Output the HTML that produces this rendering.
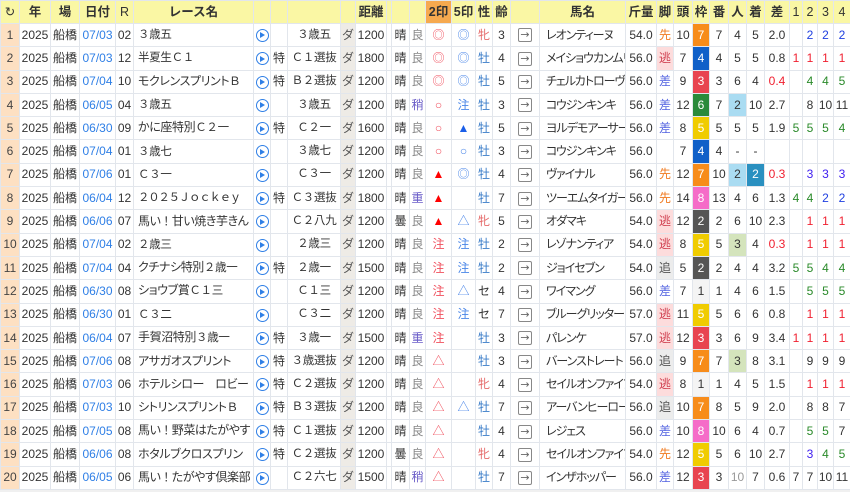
<!DOCTYPE html>
<html><head><meta charset="utf-8"><style>
*{margin:0;padding:0;box-sizing:border-box}
body{width:850px;height:492px;overflow:hidden;background:#f0f0f0;font-family:"Liberation Sans","Noto Sans CJK JP",sans-serif;font-size:12px;color:#333}
table{border-collapse:collapse;table-layout:fixed;width:850px;background:#fff}
td,th{border:1px solid #e2e6ec;text-align:center;white-space:nowrap;overflow:hidden;padding:0;height:23.3px;line-height:21px}
th{background:#faf7a4;font-weight:bold;height:23px;font-size:12.5px}
th.o{background:#f6a94f}
td.n{background:#fde0c2;color:#444}
td.dt{color:#2f7fe6}
td.nm{text-align:left;padding-left:4px;font-feature-settings:"palt";letter-spacing:-0.4px}
td.hn{text-align:left;padding-left:6px;font-feature-settings:"palt";letter-spacing:-1px}
td.cl{font-size:11.5px;letter-spacing:-0.3px}
.fw{font-feature-settings:normal;letter-spacing:-0.3px;font-size:11.5px}
td.da{background:#eeebe6;color:#555}
td.g{color:#888}
td.p{color:#6a5cc8}
.pl{display:inline-block;width:13px;height:13px;border:1.5px solid #2f7fe6;border-radius:50%;position:relative;vertical-align:middle}
.pl:after{content:"";position:absolute;left:3.5px;top:2.5px;border-left:5px solid #2f7fe6;border-top:3px solid transparent;border-bottom:3px solid transparent}
.ar{display:inline-block;width:14px;height:14px;border:1px solid #888;border-radius:2px;font-size:11px;line-height:12px;color:#666;vertical-align:middle;font-family:"DejaVu Sans",sans-serif}
.r{color:#f0505e}.b{color:#4a86e8}.rr{color:#f00}.bb{color:#1a5ee8}
.m{color:#3a7cc8}.f{color:#e56a6a}
.s{color:#f07a20}.e{background:#fddcdc;color:#d04050}.sa{color:#5060e0}.o2{background:#ececec;color:#555}
.w1{background:#f4f4f4}.w2{background:#555;color:#fff}.w3{background:#e84450;color:#fff}.w4{background:#1060c8;color:#fff}.w5{background:#f0cc00;color:#fff}.w6{background:#2a8a3a;color:#fff}.w7{background:#f78c1a;color:#fff}.w8{background:#f56cc8;color:#fff}
.lb{background:#aadcf2}.lg{background:#d4e4bc}.db{background:#2a90c0;color:#fff}
.red{color:#f02030}.c1{color:#f02030}.c2{color:#2040e0}.c3{color:#4020f0}.cg{color:#2a8a2a}.gy{color:#999}
</style></head><body>
<table>
<colgroup><col style="width:19px"><col style="width:31px"><col style="width:29px"><col style="width:36px"><col style="width:18px"><col style="width:120px"><col style="width:17px"><col style="width:17px"><col style="width:53px"><col style="width:15px"><col style="width:31px"><col style="width:5px"><col style="width:18px"><col style="width:16px"><col style="width:26px"><col style="width:24px"><col style="width:17px"><col style="width:18px"><col style="width:29px"><col style="width:86px"><col style="width:31px"><col style="width:17px"><col style="width:19px"><col style="width:17px"><col style="width:19px"><col style="width:18px"><col style="width:18px"><col style="width:25px"><col style="width:13px"><col style="width:15px"><col style="width:16px"><col style="width:17px"></colgroup>
<tr><th style="font-weight:normal">↻</th><th>年</th><th>場</th><th>日付</th><th style="font-weight:normal">R</th><th>レース名</th><th></th><th></th><th></th><th></th><th>距離</th><th></th><th></th><th></th><th class="o">2印</th><th>5印</th><th>性</th><th>齢</th><th></th><th>馬名</th><th>斤量</th><th>脚</th><th>頭</th><th>枠</th><th>番</th><th>人</th><th>着</th><th>差</th><th style="font-weight:normal">1</th><th style="font-weight:normal">2</th><th style="font-weight:normal">3</th><th style="font-weight:normal">4</th></tr>
<tr><td class="n">1</td><td>2025</td><td>船橋</td><td class="dt">07/03</td><td>02</td><td class="nm"><span class="fw">３歳五</span></td><td><span class="pl"></span></td><td></td><td class="cl">３歳五</td><td class="da">ダ</td><td>1200</td><td></td><td>晴</td><td class="g">良</td><td class="r">◎</td><td class="b">◎</td><td class="f">牝</td><td>3</td><td><span class="ar">→</span></td><td class="hn">レオンティーヌ</td><td>54.0</td><td class="s">先</td><td>10</td><td class="w7">7</td><td>7</td><td>4</td><td>5</td><td>2.0</td><td></td><td class="c2">2</td><td class="c2">2</td><td class="c2">2</td></tr>
<tr><td class="n">2</td><td>2025</td><td>船橋</td><td class="dt">07/03</td><td>12</td><td class="nm"><span class="fw">半夏生Ｃ１</span></td><td><span class="pl"></span></td><td>特</td><td class="cl">Ｃ１選抜</td><td class="da">ダ</td><td>1800</td><td></td><td>晴</td><td class="g">良</td><td class="r">◎</td><td class="b">◎</td><td class="m">牡</td><td>4</td><td><span class="ar">→</span></td><td class="hn">メイショウカンムリ</td><td>56.0</td><td class="e">逃</td><td>7</td><td class="w4">4</td><td>4</td><td>5</td><td>5</td><td>0.8</td><td class="c1">1</td><td class="c1">1</td><td class="c1">1</td><td class="c1">1</td></tr>
<tr><td class="n">3</td><td>2025</td><td>船橋</td><td class="dt">07/04</td><td>10</td><td class="nm">モクレンスプリント<span class="fw">Ｂ</span></td><td><span class="pl"></span></td><td>特</td><td class="cl">Ｂ２選抜</td><td class="da">ダ</td><td>1200</td><td></td><td>晴</td><td class="g">良</td><td class="r">◎</td><td class="b">◎</td><td class="m">牡</td><td>5</td><td><span class="ar">→</span></td><td class="hn">チェルカトローヴァ</td><td>56.0</td><td class="sa">差</td><td>9</td><td class="w3">3</td><td>3</td><td>6</td><td>4</td><td class="red">0.4</td><td></td><td class="cg">4</td><td class="cg">4</td><td class="cg">5</td></tr>
<tr><td class="n">4</td><td>2025</td><td>船橋</td><td class="dt">06/05</td><td>04</td><td class="nm"><span class="fw">３歳五</span></td><td><span class="pl"></span></td><td></td><td class="cl">３歳五</td><td class="da">ダ</td><td>1200</td><td></td><td>晴</td><td class="p">稍</td><td class="r">○</td><td class="b">注</td><td class="m">牡</td><td>3</td><td><span class="ar">→</span></td><td class="hn">コウジンキンキ</td><td>56.0</td><td class="sa">差</td><td>12</td><td class="w6">6</td><td>7</td><td class="lb">2</td><td>10</td><td>2.7</td><td></td><td>8</td><td>10</td><td>11</td></tr>
<tr><td class="n">5</td><td>2025</td><td>船橋</td><td class="dt">06/30</td><td>09</td><td class="nm">かに座特別<span class="fw">Ｃ２一</span></td><td><span class="pl"></span></td><td>特</td><td class="cl">Ｃ２一</td><td class="da">ダ</td><td>1600</td><td></td><td>晴</td><td class="g">良</td><td class="r">○</td><td class="bb">▲</td><td class="m">牡</td><td>5</td><td><span class="ar">→</span></td><td class="hn">ヨルデモアーサー</td><td>56.0</td><td class="sa">差</td><td>8</td><td class="w5">5</td><td>5</td><td>5</td><td>5</td><td>1.9</td><td class="cg">5</td><td class="cg">5</td><td class="cg">5</td><td class="cg">4</td></tr>
<tr><td class="n">6</td><td>2025</td><td>船橋</td><td class="dt">07/04</td><td>01</td><td class="nm"><span class="fw">３歳七</span></td><td><span class="pl"></span></td><td></td><td class="cl">３歳七</td><td class="da">ダ</td><td>1200</td><td></td><td>晴</td><td class="g">良</td><td class="r">○</td><td class="b">○</td><td class="m">牡</td><td>3</td><td><span class="ar">→</span></td><td class="hn">コウジンキンキ</td><td>56.0</td><td></td><td>7</td><td class="w4">4</td><td>4</td><td>-</td><td>-</td><td></td><td></td><td></td><td></td><td></td></tr>
<tr><td class="n">7</td><td>2025</td><td>船橋</td><td class="dt">07/06</td><td>01</td><td class="nm"><span class="fw">Ｃ３一</span></td><td><span class="pl"></span></td><td></td><td class="cl">Ｃ３一</td><td class="da">ダ</td><td>1200</td><td></td><td>晴</td><td class="g">良</td><td class="rr">▲</td><td class="b">◎</td><td class="m">牡</td><td>4</td><td><span class="ar">→</span></td><td class="hn">ヴァイナル</td><td>56.0</td><td class="s">先</td><td>12</td><td class="w7">7</td><td>10</td><td class="lb">2</td><td class="db">2</td><td class="red">0.3</td><td></td><td class="c3">3</td><td class="c3">3</td><td class="c3">3</td></tr>
<tr><td class="n">8</td><td>2025</td><td>船橋</td><td class="dt">06/04</td><td>12</td><td class="nm"><span class="fw" style="letter-spacing:-1.3px">２０２５Ｊｏｃｋｅｙ</span></td><td><span class="pl"></span></td><td>特</td><td class="cl">Ｃ３選抜</td><td class="da">ダ</td><td>1800</td><td></td><td>晴</td><td class="p">重</td><td class="rr">▲</td><td></td><td class="m">牡</td><td>7</td><td><span class="ar">→</span></td><td class="hn">ツーエムタイガー</td><td>56.0</td><td class="s">先</td><td>14</td><td class="w8">8</td><td>13</td><td>4</td><td>6</td><td>1.3</td><td class="cg">4</td><td class="cg">4</td><td class="c2">2</td><td class="c2">2</td></tr>
<tr><td class="n">9</td><td>2025</td><td>船橋</td><td class="dt">06/06</td><td>07</td><td class="nm">馬い<span class="fw">！</span>甘い焼き芋きん</td><td><span class="pl"></span></td><td></td><td class="cl">Ｃ２八九</td><td class="da">ダ</td><td>1200</td><td></td><td>曇</td><td class="g">良</td><td class="rr">▲</td><td class="b">△</td><td class="f">牝</td><td>5</td><td><span class="ar">→</span></td><td class="hn">オダマキ</td><td>54.0</td><td class="e">逃</td><td>12</td><td class="w2">2</td><td>2</td><td>6</td><td>10</td><td>2.3</td><td></td><td class="c1">1</td><td class="c1">1</td><td class="c1">1</td></tr>
<tr><td class="n">10</td><td>2025</td><td>船橋</td><td class="dt">07/04</td><td>02</td><td class="nm"><span class="fw">２歳三</span></td><td><span class="pl"></span></td><td></td><td class="cl">２歳三</td><td class="da">ダ</td><td>1200</td><td></td><td>晴</td><td class="g">良</td><td class="r">注</td><td class="b">注</td><td class="m">牡</td><td>2</td><td><span class="ar">→</span></td><td class="hn">レゾナンティア</td><td>54.0</td><td class="e">逃</td><td>8</td><td class="w5">5</td><td>5</td><td class="lg">3</td><td>4</td><td class="red">0.3</td><td></td><td class="c1">1</td><td class="c1">1</td><td class="c1">1</td></tr>
<tr><td class="n">11</td><td>2025</td><td>船橋</td><td class="dt">07/04</td><td>04</td><td class="nm">クチナシ特別<span class="fw">２歳一</span></td><td><span class="pl"></span></td><td>特</td><td class="cl">２歳一</td><td class="da">ダ</td><td>1500</td><td></td><td>晴</td><td class="g">良</td><td class="r">注</td><td class="b">注</td><td class="m">牡</td><td>2</td><td><span class="ar">→</span></td><td class="hn">ジョイセブン</td><td>54.0</td><td class="o2">追</td><td>5</td><td class="w2">2</td><td>2</td><td>4</td><td>4</td><td>3.2</td><td class="cg">5</td><td class="cg">5</td><td class="cg">4</td><td class="cg">4</td></tr>
<tr><td class="n">12</td><td>2025</td><td>船橋</td><td class="dt">06/30</td><td>08</td><td class="nm">ショウブ賞<span class="fw">Ｃ１三</span></td><td><span class="pl"></span></td><td></td><td class="cl">Ｃ１三</td><td class="da">ダ</td><td>1200</td><td></td><td>晴</td><td class="g">良</td><td class="r">注</td><td class="b">△</td><td>セ</td><td>4</td><td><span class="ar">→</span></td><td class="hn">ワイマング</td><td>56.0</td><td class="sa">差</td><td>7</td><td class="w1">1</td><td>1</td><td>4</td><td>6</td><td>1.5</td><td></td><td class="cg">5</td><td class="cg">5</td><td class="cg">5</td></tr>
<tr><td class="n">13</td><td>2025</td><td>船橋</td><td class="dt">06/30</td><td>01</td><td class="nm"><span class="fw">Ｃ３二</span></td><td><span class="pl"></span></td><td></td><td class="cl">Ｃ３二</td><td class="da">ダ</td><td>1200</td><td></td><td>晴</td><td class="g">良</td><td class="r">注</td><td class="b">注</td><td>セ</td><td>7</td><td><span class="ar">→</span></td><td class="hn">ブルーグリッター</td><td>57.0</td><td class="e">逃</td><td>11</td><td class="w5">5</td><td>5</td><td>6</td><td>6</td><td>0.8</td><td></td><td class="c1">1</td><td class="c1">1</td><td class="c1">1</td></tr>
<tr><td class="n">14</td><td>2025</td><td>船橋</td><td class="dt">06/04</td><td>07</td><td class="nm">手賀沼特別<span class="fw">３歳一</span></td><td><span class="pl"></span></td><td>特</td><td class="cl">３歳一</td><td class="da">ダ</td><td>1500</td><td></td><td>晴</td><td class="p">重</td><td class="r">注</td><td></td><td class="m">牡</td><td>3</td><td><span class="ar">→</span></td><td class="hn">パレンケ</td><td>57.0</td><td class="e">逃</td><td>12</td><td class="w3">3</td><td>3</td><td>6</td><td>9</td><td>3.4</td><td class="c1">1</td><td class="c1">1</td><td class="c1">1</td><td class="c1">1</td></tr>
<tr><td class="n">15</td><td>2025</td><td>船橋</td><td class="dt">07/06</td><td>08</td><td class="nm">アサガオスプリント</td><td><span class="pl"></span></td><td>特</td><td class="cl">３歳選抜</td><td class="da">ダ</td><td>1200</td><td></td><td>晴</td><td class="g">良</td><td class="r">△</td><td></td><td class="m">牡</td><td>3</td><td><span class="ar">→</span></td><td class="hn">バーンストレート</td><td>56.0</td><td class="o2">追</td><td>9</td><td class="w7">7</td><td>7</td><td class="lg">3</td><td>8</td><td>3.1</td><td></td><td>9</td><td>9</td><td>9</td></tr>
<tr><td class="n">16</td><td>2025</td><td>船橋</td><td class="dt">07/03</td><td>06</td><td class="nm">ホテルシロー<span class="fw">　</span>ロビー</td><td><span class="pl"></span></td><td>特</td><td class="cl">Ｃ２選抜</td><td class="da">ダ</td><td>1200</td><td></td><td>晴</td><td class="g">良</td><td class="r">△</td><td></td><td class="f">牝</td><td>4</td><td><span class="ar">→</span></td><td class="hn">セイルオンファイア</td><td>54.0</td><td class="e">逃</td><td>8</td><td class="w1">1</td><td>1</td><td>4</td><td>5</td><td>1.5</td><td></td><td class="c1">1</td><td class="c1">1</td><td class="c1">1</td></tr>
<tr><td class="n">17</td><td>2025</td><td>船橋</td><td class="dt">07/03</td><td>10</td><td class="nm">シトリンスプリント<span class="fw">Ｂ</span></td><td><span class="pl"></span></td><td>特</td><td class="cl">Ｂ３選抜</td><td class="da">ダ</td><td>1200</td><td></td><td>晴</td><td class="g">良</td><td class="r">△</td><td class="b">△</td><td class="m">牡</td><td>7</td><td><span class="ar">→</span></td><td class="hn">アーバンヒーロー</td><td>56.0</td><td class="o2">追</td><td>10</td><td class="w7">7</td><td>8</td><td>5</td><td>9</td><td>2.0</td><td></td><td>8</td><td>8</td><td>7</td></tr>
<tr><td class="n">18</td><td>2025</td><td>船橋</td><td class="dt">07/05</td><td>08</td><td class="nm">馬い<span class="fw">！</span>野菜はたがやす</td><td><span class="pl"></span></td><td>特</td><td class="cl">Ｃ１選抜</td><td class="da">ダ</td><td>1200</td><td></td><td>晴</td><td class="g">良</td><td class="r">△</td><td></td><td class="m">牡</td><td>4</td><td><span class="ar">→</span></td><td class="hn">レジェス</td><td>56.0</td><td class="sa">差</td><td>10</td><td class="w8">8</td><td>10</td><td>6</td><td>4</td><td>0.7</td><td></td><td class="cg">5</td><td class="cg">5</td><td>7</td></tr>
<tr><td class="n">19</td><td>2025</td><td>船橋</td><td class="dt">06/06</td><td>08</td><td class="nm">ホタルブクロスプリン</td><td><span class="pl"></span></td><td>特</td><td class="cl">Ｃ２選抜</td><td class="da">ダ</td><td>1200</td><td></td><td>曇</td><td class="g">良</td><td class="r">△</td><td></td><td class="f">牝</td><td>4</td><td><span class="ar">→</span></td><td class="hn">セイルオンファイア</td><td>54.0</td><td class="s">先</td><td>12</td><td class="w5">5</td><td>5</td><td>6</td><td>10</td><td>2.7</td><td></td><td class="c3">3</td><td class="cg">4</td><td class="cg">5</td></tr>
<tr><td class="n">20</td><td>2025</td><td>船橋</td><td class="dt">06/05</td><td>06</td><td class="nm">馬い<span class="fw">！</span>たがやす倶楽部</td><td><span class="pl"></span></td><td></td><td class="cl">Ｃ２六七</td><td class="da">ダ</td><td>1500</td><td></td><td>晴</td><td class="p">稍</td><td class="r">△</td><td></td><td class="m">牡</td><td>7</td><td><span class="ar">→</span></td><td class="hn">インザホッパー</td><td>56.0</td><td class="sa">差</td><td>12</td><td class="w3">3</td><td>3</td><td class="gy">10</td><td>7</td><td>0.6</td><td>7</td><td>7</td><td>10</td><td>11</td></tr>
</table>
</body></html>
